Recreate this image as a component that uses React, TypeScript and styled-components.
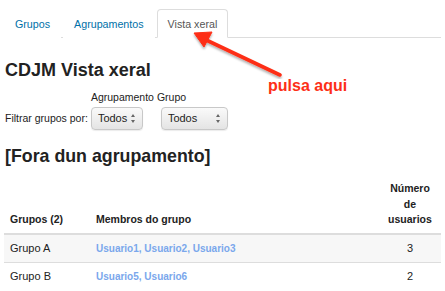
import { createGlobalStyle, styled } from 'styled-components';

const GlobalStyle = createGlobalStyle`
    body {
        margin: 0;
        background: #fff;
        font-family: "Liberation Sans", Arial, sans-serif;
        color: #333;
    }
`;

const groups = [
    { name: 'Grupo A', members: 'Usuario1, Usuario2, Usuario3', count: 3 },
    { name: 'Grupo B', members: 'Usuario5, Usuario6', count: 2 },
];

export default function App() {
    return (
        <Page>
            <GlobalStyle />
            <Tabs>
                <Tab>Grupos</Tab>
                <Tab>Agrupamentos</Tab>
                <Tab $active>Vista xeral</Tab>
            </Tabs>
            <Content>
                <Title>CDJM Vista xeral</Title>
                <FilterRow>
                    <FilterLabel>Filtrar grupos por:</FilterLabel>
                    <FilterFields>
                        <LabelRow>
                            <FieldLabel>Agrupamento</FieldLabel>
                            <FieldLabel>Grupo</FieldLabel>
                        </LabelRow>
                        <SelectRow>
                            <Select $width={52}>Todos</Select>
                            <Select $width={67}>Todos</Select>
                        </SelectRow>
                    </FilterFields>
                </FilterRow>
                <Subtitle>[Fora dun agrupamento]</Subtitle>
            </Content>
            <Table>
                <thead>
                    <tr>
                        <Th $width={74}>Grupos (2)</Th>
                        <Th>Membros do grupo</Th>
                        <Th $center $width={50}>Número<br />de<br />usuarios</Th>
                    </tr>
                </thead>
                <tbody>
                    {groups.map((g, idx) => (
                        <Row key={g.name} $striped={idx % 2 === 0}>
                            <Td>{g.name}</Td>
                            <Td><MemberLink>{g.members}</MemberLink></Td>
                            <Td $center>{g.count}</Td>
                        </Row>
                    ))}
                </tbody>
            </Table>
            <Callout>
                <svg width="100" height="50" viewBox="0 0 100 50">
                    <defs>
                        <filter id="sh" x="-20%" y="-20%" width="140%" height="160%">
                            <feDropShadow dx="0" dy="2" stdDeviation="1.2" floodColor="#000" floodOpacity="0.3" />
                        </filter>
                    </defs>
                    <g filter="url(#sh)" fill="#fd2f17" stroke="#fd2f17">
                        <line x1="12" y1="9" x2="90" y2="46" strokeWidth="3.6" strokeLinecap="round" />
                        <polygon points="4,4 22,3 14,18" strokeWidth="1" strokeLinejoin="round" />
                    </g>
                </svg>
                <CalloutText>pulsa aqui</CalloutText>
            </Callout>
        </Page>
    );
}

const Page = styled.div`
    position: relative;
    width: 445px;
    height: 291px;
    overflow: hidden;
    padding: 0 4px;
    box-sizing: border-box;
`;

const Tabs = styled.ul`
    display: flex;
    list-style: none;
    margin: 0;
    padding: 9px 0 0;
    border-bottom: 1px solid #ddd;
`;

const Tab = styled.li<{ $active?: boolean }>`
    height: 27px;
    line-height: 28px;
    padding: 0 10px;
    margin-right: 2px;
    margin-bottom: -1px;
    font-size: 10.7px;
    border: 1px solid ${({ $active }) => ($active ? '#ddd' : 'transparent')};
    border-bottom-color: ${({ $active }) => ($active ? '#fff' : 'transparent')};
    border-radius: 4px 4px 0 0;
    background: #fff;
    color: ${({ $active }) => ($active ? '#555' : '#0070a8')};
`;

const Content = styled.div`
    padding-left: 1px;
`;

const Title = styled.h2`
    margin: 21px 0 0;
    font-size: 18px;
    font-weight: bold;
    line-height: 22px;
    color: #222;
`;

const FilterRow = styled.div`
    display: flex;
    align-items: flex-end;
    margin-top: 9px;
`;

const FilterLabel = styled.span`
    font-size: 10.5px;
    line-height: 14px;
    margin-bottom: 5px;
    margin-right: 3px;
    color: #222;
`;

const FilterFields = styled.div`
    display: flex;
    flex-direction: column;
`;

const LabelRow = styled.div`
    display: flex;
    gap: 3px;
`;

const SelectRow = styled.div`
    display: flex;
    gap: 18px;
    margin-top: 3px;
`;

const FieldLabel = styled.span`
    font-size: 10.5px;
    line-height: 14px;
    white-space: nowrap;
    color: #222;
`;

const Select = styled.div<{ $width: number }>`
    position: relative;
    width: ${({ $width }) => $width}px;
    height: 23px;
    box-sizing: border-box;
    padding-left: 6px;
    line-height: 21px;
    font-size: 11px;
    color: #222;
    border: 1px solid #c8c8c8;
    border-radius: 4px;
    background: linear-gradient(#fafafa, #e4e4e4);
    box-shadow: 0 1px 1px rgba(0, 0, 0, 0.08);

    &::after {
        content: '';
        position: absolute;
        right: 7px;
        top: 6px;
        border-left: 2.5px solid transparent;
        border-right: 2.5px solid transparent;
        border-bottom: 3px solid #666;
    }

    &::before {
        content: '';
        position: absolute;
        right: 7px;
        top: 12px;
        border-left: 2.5px solid transparent;
        border-right: 2.5px solid transparent;
        border-top: 3px solid #666;
    }
`;

const Subtitle = styled.h3`
    margin: 15px 0 0;
    font-size: 17.8px;
    line-height: 22px;
    font-weight: bold;
    color: #222;
`;

const Table = styled.table`
    width: 437px;
    margin-top: 14px;
    border-collapse: collapse;
    font-size: 11px;
`;

const Th = styled.th<{ $center?: boolean; $width?: number }>`
    width: ${({ $width }) => ($width ? `${$width}px` : 'auto')};
    padding: 0 6px 5px;
    text-align: ${({ $center }) => ($center ? 'center' : 'left')};
    vertical-align: bottom;
    font-size: 10.5px;
    line-height: 15.5px;
    color: #222;
    border-bottom: 2px solid #ddd;
`;

const Row = styled.tr<{ $striped: boolean }>`
    background: ${({ $striped }) => ($striped ? '#f7f7f7' : '#fff')};
    border-bottom: 1px solid #ddd;

    &:last-child {
        border-bottom: none;
    }
`;

const Td = styled.td<{ $center?: boolean }>`
    height: 27px;
    padding: 0 6px;
    text-align: ${({ $center }) => ($center ? 'center' : 'left')};
    font-size: 11px;
    color: #222;
`;

const MemberLink = styled.span`
    font-size: 10px;
    font-weight: bold;
    color: #7aa7ec;
`;

const Callout = styled.div`
    position: absolute;
    left: 190px;
    top: 29px;
`;

const CalloutText = styled.div`
    position: absolute;
    left: 78px;
    top: 48px;
    white-space: nowrap;
    font-size: 16px;
    font-weight: bold;
    color: #fd2f17;
`;
